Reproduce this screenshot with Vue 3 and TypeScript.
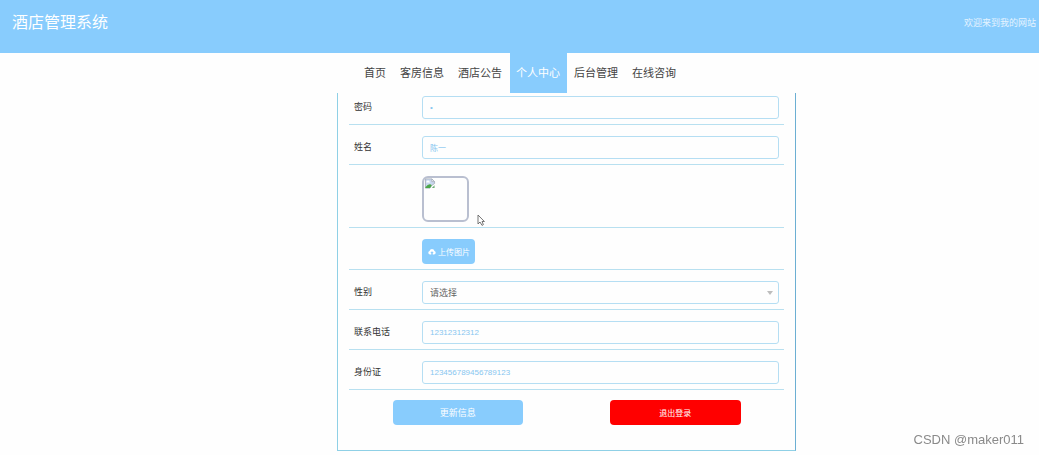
<script setup lang="ts">
import { ref } from 'vue'

interface NavItem {
  label: string
  active?: boolean
}

const navItems: NavItem[] = [
  { label: '首页' },
  { label: '客房信息' },
  { label: '酒店公告' },
  { label: '个人中心', active: true },
  { label: '后台管理' },
  { label: '在线咨询' },
]

const password = ref('1')
const fullName = ref('陈一')
const gender = ref('')
const phone = ref('12312312312')
const idCard = ref('123456789456789123')
</script>

<template>
  <div class="page">
    <header class="header">
      <h1 class="title">酒店管理系统</h1>
      <span class="welcome">欢迎来到我的网站</span>
    </header>

    <nav class="nav">
      <a
        v-for="item in navItems"
        :key="item.label"
        href="#"
        class="nav-link"
        :class="{ active: item.active }"
      >{{ item.label }}</a>
    </nav>

    <main class="main">
      <form class="panel" @submit.prevent>
        <div class="row first">
          <label class="label" for="password">密码</label>
          <input id="password" v-model="password" class="field" type="password" autocomplete="off" />
        </div>
        <div class="row">
          <label class="label" for="full-name">姓名</label>
          <input id="full-name" v-model="fullName" class="field" type="text" />
        </div>
        <div class="row">
          <span class="label"></span>
          <div class="avatar">
            <svg class="broken" viewBox="0 0 12 12" aria-hidden="true">
              <path d="M1 1h7l3 3v2L8 8l-2 3H1z" fill="#c9d8f0" stroke="#a9b0bd" />
              <path d="M8 1v3h3z" fill="#fff" stroke="#a9b0bd" />
              <path d="M2 4q1-2 3-1l1 2H2z" fill="#fff" />
              <path d="M1 10q3-4 6-3l1 1-2 3H1z" fill="#4ca64a" />
              <path d="M8 11l3-3v3z" fill="#6fae78" />
            </svg>
          </div>
          <svg class="pointer" viewBox="0 0 8 12" aria-hidden="true">
            <path d="M1 1v9l2-2 2 3.4 1.4-.8L5 7.5h2.4z" fill="#fff" stroke="#666" stroke-width="0.9" />
          </svg>
        </div>
        <div class="row">
          <span class="label"></span>
          <button class="upload" type="button">
            <svg class="cloud" viewBox="0 0 16 12" aria-hidden="true">
              <path d="M4 11a3.6 3.6 0 0 1-1-7 5.2 5.2 0 0 1 10 0 3.6 3.6 0 0 1-1 7H9.500V8h2L8 4.500 4.500 8h2v3z" fill="#fff" />
            </svg>
            <span>上传图片</span>
          </button>
        </div>
        <div class="row">
          <label class="label" for="gender">性别</label>
          <div class="select-wrap">
            <select id="gender" v-model="gender" class="field select">
              <option value="">请选择</option>
            </select>
            <svg class="arrow" viewBox="0 0 6 4" aria-hidden="true">
              <path d="M0 0h6L3 4z" fill="#bdbdbd" />
            </svg>
          </div>
        </div>
        <div class="row">
          <label class="label" for="phone">联系电话</label>
          <input id="phone" v-model="phone" class="field" type="text" />
        </div>
        <div class="row">
          <label class="label" for="id-card">身份证</label>
          <input id="id-card" v-model="idCard" class="field" type="text" />
        </div>
        <div class="actions">
          <button class="action update" type="submit">更新信息</button>
          <button class="action logout" type="button">退出登录</button>
        </div>
      </form>
    </main>

    <span class="watermark">CSDN @maker011</span>
  </div>
</template>

<style>
body {
  margin: 0;
  background: #fefefe;
}
</style>

<style scoped>
.page {
  font-family: "Liberation Sans", "Noto Sans CJK SC", sans-serif;
  color: #333;
}

.header {
  display: flex;
  justify-content: space-between;
  align-items: flex-start;
  box-sizing: border-box;
  height: 53px;
  padding: 11px 3px 0 12px;
  background: #88ccfd;
  color: #fff;
}

.title {
  margin: 0;
  font-size: 16px;
  line-height: 24px;
  font-weight: 400;
}

.welcome {
  font-size: 9px;
  line-height: 24px;
  color: #e4f3ff;
}

.nav {
  display: flex;
  justify-content: center;
  gap: 1px;
  height: 40px;
  padding-left: 2px;
}

.nav-link {
  padding: 0 7px 0 6px;
  font-size: 11px;
  line-height: 40px;
  color: #444;
  text-decoration: none;
}

.nav-link.active {
  background: #88ccfd;
  color: #fff;
}

.main {
  display: grid;
  grid-template-columns: 337fr 459fr 243fr;
}

.panel {
  grid-column: 2;
  box-sizing: border-box;
  padding: 0 11px 25px;
  border: 1px solid #8fd0e6;
  border-top: 0;
  border-right-color: #6cafd3;
}

.row {
  position: relative;
  display: flex;
  align-items: center;
  padding: 11px 5px 5px;
  border-bottom: 1px solid #b8e0f0;
}

.row.first {
  padding-top: 3px;
}

.label {
  flex: none;
  width: 68px;
  font-size: 9px;
  line-height: 23px;
}

.field {
  flex: 1;
  min-width: 0;
  box-sizing: border-box;
  height: 23px;
  margin: 0;
  padding: 0 7px;
  border: 1px solid #b5def3;
  border-radius: 3px;
  background: #fefefe;
  font-family: inherit;
  font-size: 8px;
  color: #88c6f0;
  outline: none;
}

.select-wrap {
  position: relative;
  display: flex;
  flex: 1;
}

.select {
  appearance: none;
  font-size: 9px;
  color: #666;
}

.arrow {
  position: absolute;
  top: 10px;
  right: 6px;
  width: 6px;
  height: 4px;
}

.avatar {
  box-sizing: border-box;
  width: 47px;
  height: 46px;
  border: 2px solid #b9bfd0;
  border-radius: 6px;
}

.broken {
  display: block;
  width: 12px;
  height: 11px;
}

.pointer {
  position: absolute;
  top: 49px;
  left: 128px;
  width: 8px;
  height: 12px;
}

.upload {
  display: flex;
  align-items: center;
  gap: 2px;
  height: 25px;
  padding: 0 5px 0 6px;
  border: 0;
  border-radius: 4px;
  background: #88ccfd;
  font-family: inherit;
  font-size: 8px;
  color: #fff;
}

.cloud {
  width: 8px;
  height: 6px;
}

.actions {
  display: flex;
  justify-content: space-around;
  padding-top: 10px;
}

.action {
  width: 30%;
  height: 25px;
  padding: 0;
  border: 0;
  border-radius: 4px;
  font-family: inherit;
  color: #fff;
}

.update {
  background: #88ccfd;
  font-size: 9px;
}

.logout {
  background: #f00;
  font-size: 8px;
}

.watermark {
  position: fixed;
  right: 15px;
  bottom: 5px;
  font-size: 13px;
  line-height: 20px;
  color: #8a8a8a;
}
</style>
